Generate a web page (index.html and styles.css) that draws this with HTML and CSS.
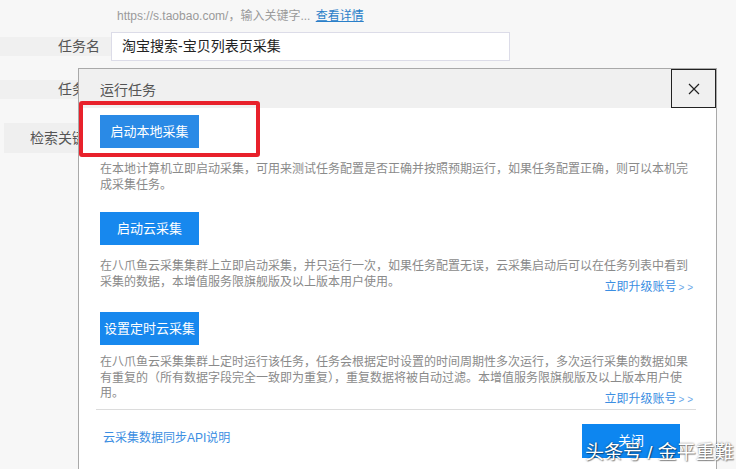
FILE: index.html
```html
<!DOCTYPE html>
<html lang="zh">
<head>
<meta charset="utf-8">
<link rel="stylesheet" href="styles.css">
</head>
<body>
<div class="page">
  <div class="form">
    <div class="hint">https://s.taobao.com/，输入关键字... <a class="hint-link">查看详情</a></div>
    <div class="row row-name">
      <div class="label">任务名</div>
      <div class="input">淘宝搜索-宝贝列表页采集</div>
    </div>
    <div class="row row-group">
      <div class="label">任务组</div>
    </div>
    <div class="row row-kw">
      <div class="label label-box">检索关键词</div>
    </div>
  </div>

  <div class="modal">
    <div class="modal-head">
      <div class="modal-title">运行任务</div>
      <div class="modal-close">
        <svg width="12" height="12" viewBox="0 0 12 12"><path d="M1 1L11 11M11 1L1 11" stroke="#222" stroke-width="1.2" fill="none"/></svg>
      </div>
    </div>
    <div class="modal-body">
      <div class="opt opt-local">
        <div class="btn btn-local">启动本地采集</div>
        <p class="desc">在本地计算机立即启动采集，可用来测试任务配置是否正确并按照预期运行，如果任务配置正确，则可以本机完成采集任务。</p>
      </div>
      <div class="opt opt-cloud">
        <div class="btn">启动云采集</div>
        <div class="desc-wrap">
          <p class="desc">在八爪鱼云采集集群上立即启动采集，并只运行一次，如果任务配置无误，云采集启动后可以在任务列表中看到采集的数据，本增值服务限旗舰版及以上版本用户使用。</p>
          <a class="upgrade">立即升级账号<span class="arrows">&gt; &gt;</span></a>
        </div>
      </div>
      <div class="opt opt-timer">
        <div class="btn">设置定时云采集</div>
        <div class="desc-wrap">
          <p class="desc desc-timer">在八爪鱼云采集集群上定时运行该任务，任务会根据定时设置的时间周期性多次运行，多次运行采集的数据如果有重复的（所有数据字段完全一致即为重复），重复数据将被自动过滤。本增值服务限旗舰版及以上版本用户使<br>用。</p>
          <a class="upgrade">立即升级账号<span class="arrows">&gt; &gt;</span></a>
        </div>
      </div>
      <div class="modal-foot">
        <a class="api-link">云采集数据同步API说明</a>
        <div class="btn btn-close">关闭</div>
      </div>
    </div>
    <div class="highlight"></div>
  </div>

  <div class="watermark">头条号 / 金平重難</div>
</div>
</body>
</html>
```
FILE: styles.css
```css
* { box-sizing: border-box; }
html, body {
  margin: 0;
  padding: 0;
  width: 736px;
  height: 469px;
  overflow: hidden;
  background: #f7f7f7;
  font-family: "Liberation Sans", "Noto Sans CJK SC", sans-serif;
}
.page {
  position: relative;
  width: 736px;
  height: 469px;
  overflow: hidden;
}
.form {
  display: flex;
  flex-direction: column;
  padding-top: 7px;
}
.hint {
  margin-left: 117px;
  font-size: 12px;
  line-height: 18px;
  color: #9a9a9a;
}
.hint-link {
  color: #2a7fc9;
  text-decoration: underline;
  margin-left: 2px;
}
.row {
  display: flex;
  align-items: center;
}
.label {
  width: 111px;
  padding-right: 11px;
  text-align: right;
  font-size: 14px;
  color: #555;
  background: #f0f0f0;
  height: 19px;
  line-height: 19px;
}
.row-name { margin-top: 7px; height: 29px; }
.input {
  width: 399px;
  height: 29px;
  background: #fff;
  border: 1px solid #dcdce8;
  font-size: 14px;
  color: #222;
  line-height: 27px;
  padding-left: 10px;
}
.row-group { margin-top: 14px; height: 29px; }
.row-kw { margin-top: 19px; height: 30px; }
.label-box {
  height: 30px;
  line-height: 30px;
  margin-left: 4px;
  width: 107px;
  background: #efefef;
}

.modal {
  position: absolute;
  left: 78px;
  top: 68px;
  width: 639px;
  height: 420px;
  background: #fff;
  border: 1px solid #a9a9a9;
}
.modal-head {
  display: flex;
  align-items: center;
  justify-content: space-between;
  height: 39px;
  background: #f0f0f0;
}
.modal-title {
  padding-left: 21px;
  font-size: 14px;
  color: #555;
}
.modal-close {
  width: 45px;
  height: 39px;
  border: 1.5px solid #222;
  display: flex;
  align-items: center;
  justify-content: center;
}
.modal-body {
  padding: 7px 23px 0 21px;
}
.opt { display: flex; flex-direction: column; }
.opt-cloud { margin-top: 19px; }
.opt-timer { margin-top: 22px; }
.btn {
  width: 99px;
  height: 33px;
  background: #1788ee;
  color: #fff;
  font-size: 13px;
  line-height: 33px;
  text-align: center;
}
.btn-local { background: #2a8ae6; }
.desc {
  margin: 14px 0 0 0;
  font-size: 12px;
  line-height: 15.5px;
  color: #8a8a8a;
}
.desc-wrap {
  display: grid;
}
.desc-wrap > * { grid-area: 1 / 1; }
.desc-timer { margin-top: 10px; }
.upgrade {
  align-self: end;
  justify-self: end;
  font-size: 12px;
  line-height: 15px;
  color: #3b8ee2;
  margin-bottom: -5px;
}
.arrows {
  font-size: 10px;
  color: #6aa8e8;
  margin-left: 2px;
}
.modal-foot {
  margin: 7px -3px 0 -4px;
  border-top: 1px solid #dcdcdc;
  display: flex;
  justify-content: space-between;
  align-items: flex-start;
  padding: 14px 16px 0 7px;
}
.api-link {
  margin-top: 7px;
  font-size: 12px;
  line-height: 15px;
  color: #3b8ee2;
}
.btn-close {
  width: 98px;
  height: 34px;
  line-height: 34px;
  background: #0d86f0;
}
.highlight {
  position: absolute;
  left: 0;
  top: 32px;
  width: 181px;
  height: 56px;
  border: 4px solid #e8212b;
  border-radius: 3px;
}
.watermark {
  position: absolute;
  left: 585px;
  top: 440px;
  font-size: 19px;
  line-height: 26px;
  color: #fff;
  text-shadow: 0 0 2px rgba(0,0,0,0.55), 1px 1px 1px rgba(0,0,0,0.4);
  white-space: nowrap;
}
```
